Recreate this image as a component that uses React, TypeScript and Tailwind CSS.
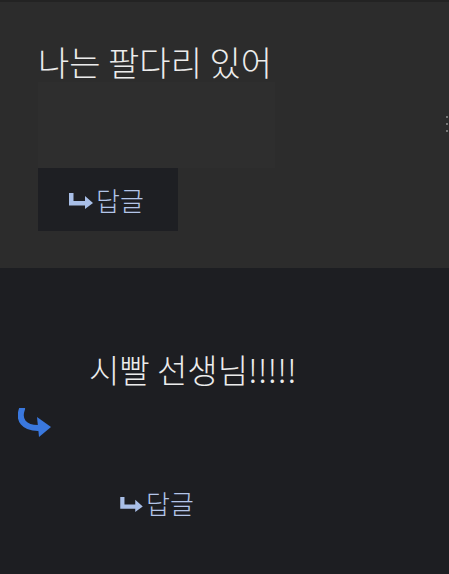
import React from "react";

const KR = { fontFamily: '"Noto Sans CJK KR", "Noto Sans", sans-serif' };

function SmallArrow({ className }: { className?: string }) {
  return (
    <svg viewBox="0 0 24 16" className={className} fill="#a9bfe8">
      <path d="M0 0 H4.5 V8 H16 V3 L24 10 L16 16 V12.5 H0 Z" />
    </svg>
  );
}

function CurvedArrow() {
  return (
    <svg viewBox="0 0 34 30" className="w-[34px] h-[30px]">
      <path d="M4 1 C0 12 6 20 20 20" stroke="#3a78de" strokeWidth="6" fill="none" strokeLinecap="round" />
      <path d="M19 9 L33 19 L21 29 Z" fill="#3a78de" />
    </svg>
  );
}

export default function App() {
  return (
    <div className="w-[449px] h-[574px] overflow-hidden bg-[#1d1e22]" style={KR}>
      <div className="h-[268px] bg-[#2c2c2c] border-t-2 border-[#232323] relative">
        <div className="pl-[38px] pt-[40px]">
          <div className="text-[34px] leading-[40px] text-[#ececec] font-light">나는 팔다리 있어</div>
          <div className="w-[237px] h-[86px] bg-[#2e2e2e]" />
          <div className="w-[140px] h-[63px] bg-[#1e1f23] flex items-center pl-[31px] gap-[3px]">
            <SmallArrow className="w-[24px] h-[16px] mt-[2px]" />
            <span className="text-[26px] leading-none text-[#b3c5e8] font-light">답글</span>
          </div>
        </div>
        <div className="absolute right-[1px] top-[114px] flex flex-col gap-[5px]">
          <div className="w-[2px] h-[2px] bg-[#777]" />
          <div className="w-[2px] h-[2px] bg-[#777]" />
          <div className="w-[2px] h-[2px] bg-[#777]" />
        </div>
      </div>
      <div className="relative h-[306px]">
        <div className="pl-[89px] pt-[81px] text-[33px] leading-[40px] text-[#ececec] font-light">시빨 선생님!!!!!</div>
        <div className="pl-[18px] pt-[19px]">
          <CurvedArrow />
        </div>
        <div className="pl-[120px] pt-[52px] flex items-center gap-[3px]">
          <SmallArrow className="w-[23px] h-[15px] mt-[2px]" />
          <span className="text-[26px] leading-none text-[#b3c5e8] font-light">답글</span>
        </div>
      </div>
    </div>
  );
}
